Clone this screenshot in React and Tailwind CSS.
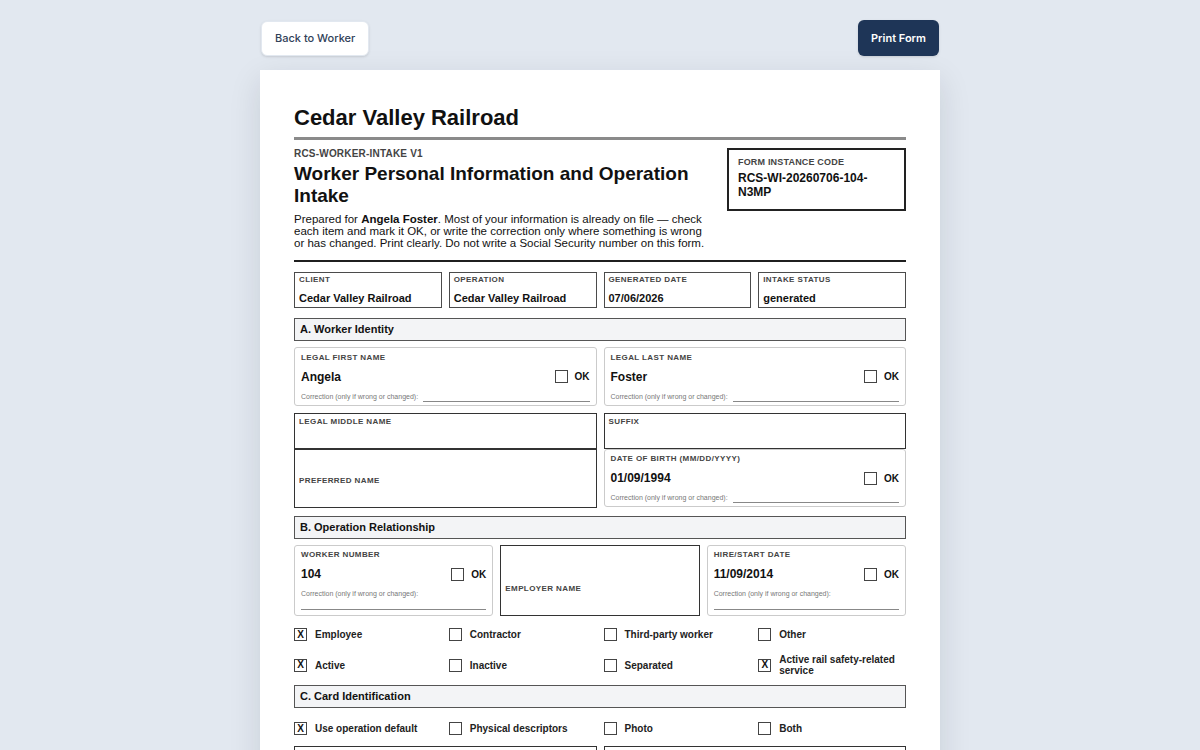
import React from 'react';

const form = { fontFamily: '"Liberation Sans", Arial, sans-serif' };

function Label({ children }) {
  return <div className="text-[8px] font-bold uppercase leading-[10px] tracking-[0.05em] text-[#444]">{children}</div>;
}

function Check({ on }) {
  return (
    <span className="flex h-[13px] w-[13px] shrink-0 items-center justify-center border-[1.5px] border-[#444] text-[10px] font-bold leading-none text-[#111]">
      {on ? 'X' : ''}
    </span>
  );
}

function Section({ children, className = '' }) {
  return (
    <div className={`flex h-[23px] items-center border-[1.5px] border-[#555] bg-[#f3f4f6] px-[5px] text-[11px] font-bold text-[#111] ${className}`}>
      {children}
    </div>
  );
}

function Meta({ label, value }) {
  return (
    <div className="h-[36px] border-[1.5px] border-[#4b4b4b] px-[4px] pt-[1.5px]">
      <Label>{label}</Label>
      <div className="mt-[6px] text-[11px] font-bold leading-[14px] text-[#111]">{value}</div>
    </div>
  );
}

function Verify({ label, value, pb = 'pb-[3px]' }) {
  return (
    <div className={`rounded-[3px] border-[1.5px] border-[#cbcbcb] px-[6px] pt-[4.5px] ${pb}`}>
      <Label>{label}</Label>
      <div className="mt-[7px] flex h-[14px] items-center justify-between">
        <span className="text-[12px] font-bold text-[#111]">{value}</span>
        <span className="flex items-center gap-[7px] text-[10px] font-bold text-[#111]">
          <Check /> OK
        </span>
      </div>
      <div className="mt-[8px] flex flex-wrap items-end gap-y-[3px]">
        <span className="mr-[5px] text-[7px] leading-[10px] text-[#777]">Correction (only if wrong or changed):</span>
        <div className="h-[8px] min-w-[110px] flex-1 border-b border-[#888]" />
      </div>
    </div>
  );
}

function Blank({ label, className = '', pad = 'pt-[3px]' }) {
  return (
    <div className={`border-[1.5px] border-[#333] px-[4px] ${pad} ${className}`}>
      <Label>{label}</Label>
    </div>
  );
}

function Opt({ on, children }) {
  return (
    <div className="flex items-center gap-[8px]">
      <Check on={on} />
      <span className="text-[10px] font-bold leading-[11px] text-[#222]">{children}</span>
    </div>
  );
}

export default function App() {
  return (
    <div className="min-h-screen bg-[#e2e8f0] pb-10 pt-5">
      <div className="mx-auto w-[680px]">
        <div className="mb-[14px] flex items-center justify-between" style={{ fontFamily: 'Inter, sans-serif' }}>
          <button className="ml-[1px] h-[35px] rounded-md border border-slate-200 bg-white px-[13px] text-[11px] font-medium text-slate-700 shadow-sm">
            Back to Worker
          </button>
          <button className="mr-[1px] h-[36px] rounded-md bg-[#1e3557] px-[13px] text-[11px] font-semibold text-white shadow-sm">
            Print Form
          </button>
        </div>

        <div className="bg-white p-[34px] shadow-[0_10px_30px_rgba(15,23,42,0.12)]" style={form}>
          <h1 className="text-[22px] font-bold leading-[27px] text-[#111]">Cedar Valley Railroad</h1>
          <div className="mt-[6px] h-[3px] bg-[#8a8a8a]" />

          <div className="mt-[8px] flex justify-between">
            <div className="w-[414px]">
              <div className="text-[10px] font-bold leading-[12px] tracking-[0.02em] text-[#444]">RCS-WORKER-INTAKE V1</div>
              <h2 className="mt-[3px] text-[19px] font-bold leading-[22px] text-[#111]">
                Worker Personal Information and Operation Intake
              </h2>
              <p className="mt-[6px] text-[11.5px] leading-[12px] text-[#111]">
                Prepared for <b>Angela Foster</b>. Most of your information is already on file — check each item and mark it OK, or write the correction only where something is wrong or has changed. Print clearly. Do not write a Social Security number on this form.
              </p>
            </div>
            <div className="h-[63px] w-[179px] border-2 border-[#222] px-[9px] pt-[7px]">
              <div className="text-[9px] font-bold leading-[10px] tracking-[0.02em] text-[#444]">FORM INSTANCE CODE</div>
              <div className="mt-[4px] text-[12px] font-bold leading-[14px] text-[#111]">RCS-WI-20260706-104-N3MP</div>
            </div>
          </div>
          <div className="mt-[11px] h-[2px] bg-[#1f1f1f]" />

          <div className="mt-[10px] grid grid-cols-4 gap-x-[7px]">
            <Meta label="Client" value="Cedar Valley Railroad" />
            <Meta label="Operation" value="Cedar Valley Railroad" />
            <Meta label="Generated Date" value="07/06/2026" />
            <Meta label="Intake Status" value="generated" />
          </div>

          <Section className="mt-[10px]">A. Worker Identity</Section>
          <div className="mt-[6px] grid grid-cols-2 gap-x-[7px]">
            <Verify label="Legal First Name" value="Angela" />
            <Verify label="Legal Last Name" value="Foster" />
          </div>
          <div className="mt-[7px] grid grid-cols-2 gap-x-[7px]">
            <div className="flex flex-col">
              <Blank label="Legal Middle Name" className="h-[36px]" />
              <Blank label="Preferred Name" className="h-[59px]" pad="pt-[26px]" />
            </div>
            <div className="flex flex-col">
              <Blank label="Suffix" className="h-[36px]" />
              <Verify label="Date of Birth (MM/DD/YYYY)" value="01/09/1994" />
            </div>
          </div>

          <Section className="mt-[8px]">B. Operation Relationship</Section>
          <div className="mt-[6px] grid grid-cols-3 gap-x-[7px]">
            <Verify label="Worker Number" value="104" pb="pb-[5px]" />
            <Blank label="Employer Name" pad="pt-[38px]" />
            <Verify label="Hire/Start Date" value="11/09/2014" pb="pb-[5px]" />
          </div>

          <div className="mt-[12px] grid grid-cols-4 gap-x-[7px] gap-y-[13px]">
            <Opt on>Employee</Opt>
            <Opt>Contractor</Opt>
            <Opt>Third-party worker</Opt>
            <Opt>Other</Opt>
            <Opt on>Active</Opt>
            <Opt>Inactive</Opt>
            <Opt>Separated</Opt>
            <Opt on>Active rail safety-related service</Opt>
          </div>

          <Section className="mt-[9px]">C. Card Identification</Section>
          <div className="mt-[14px] grid grid-cols-4 gap-x-[7px]">
            <Opt on>Use operation default</Opt>
            <Opt>Physical descriptors</Opt>
            <Opt>Photo</Opt>
            <Opt>Both</Opt>
          </div>
          <div className="mt-[11px] grid grid-cols-2 gap-x-[7px]">
            <Blank label="Height" className="h-[36px]" />
            <Blank label="Weight" className="h-[36px]" />
          </div>
          <div className="grid grid-cols-2 gap-x-[7px]">
            <Blank label="Eye Color" className="h-[36px]" />
            <Blank label="Hair Color" className="h-[36px]" />
          </div>

          <Section className="mt-[8px]">D. Contact Information</Section>
          <div className="mt-[6px] grid grid-cols-2 gap-x-[7px]">
            <Blank label="Mailing Address" className="h-[59px]" />
            <Blank label="Phone" className="h-[59px]" />
          </div>
        </div>
      </div>
    </div>
  );
}
